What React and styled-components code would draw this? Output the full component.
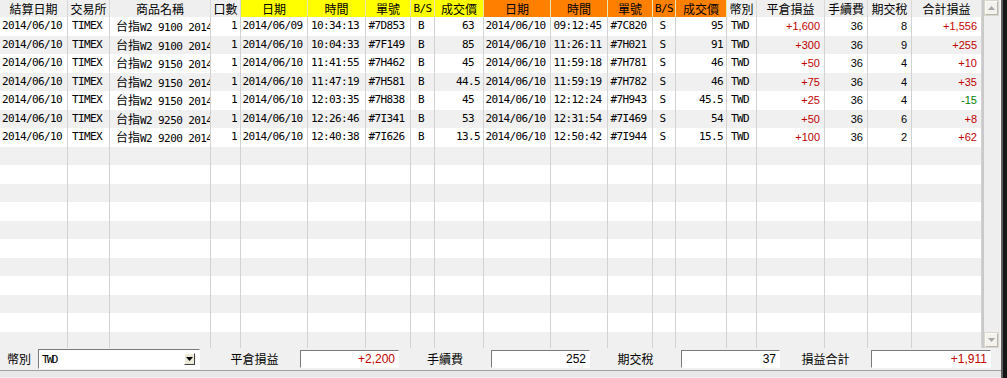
import React from 'react';
import styled, { createGlobalStyle } from 'styled-components';

const COLS =
  '68px 42px 101px 30px 67px 58px 45px 24px 49px 67px 57px 45px 23px 51px 30px 68px 43px 44px 70px';
const MONO = '"DejaVu Sans Mono", "Liberation Mono", monospace';
const CJK = '"Noto Sans CJK TC", "Noto Sans CJK SC", sans-serif';
const SANS = '"Liberation Sans", Arial, sans-serif';
const RED = '#c00000';
const GREEN = '#008000';

const Global = createGlobalStyle`
  html, body { margin: 0; padding: 0; background: #f0f0f0; overflow: hidden; }
  * { box-sizing: border-box; }
`;

const Frame = styled.div`
  display: flex;
  width: 1007px;
  height: 378px;
  overflow: hidden;
`;

const Main = styled.div`
  display: flex;
  flex-direction: column;
  width: 1001px;
  flex: none;
`;

const Edge = styled.div`
  flex: 1;
  background: #161616;
  border-left: 2px solid #5e5e5e;
`;

const GridArea = styled.div`
  display: flex;
  height: 348px;
  flex: none;
  overflow: hidden;
`;

const Table = styled.div`
  width: 982px;
  height: 348px;
  overflow: hidden;
  background: #ffffff;
  display: flex;
  flex-direction: column;
`;

const HeaderRow = styled.div`
  display: grid;
  grid-template-columns: ${COLS};
  height: 17px;
  flex: none;
`;

const toneBg = { grey: '#efefef', yellow: '#ffff00', orange: '#ff8000' };

const HeaderCell = styled.div`
  background: ${(p) => toneBg[p.$tone]};
  border-right: 1px solid ${(p) => (p.$tone === 'grey' ? '#d9d9d9' : '#e6e6b0')};
  font-family: ${(p) => (p.$latin ? MONO : CJK)};
  font-size: ${(p) => (p.$latin ? '11px' : '12px')};
  letter-spacing: ${(p) => (p.$latin ? '-0.6px' : '0')};
  line-height: 17px;
  text-align: center;
  color: #000;
  white-space: nowrap;
  overflow: hidden;
`;

const Row = styled.div`
  display: grid;
  grid-template-columns: ${COLS};
  height: 18.5px;
  flex: none;
  background: ${(p) => (p.$odd ? '#f0f0f0' : '#ffffff')};
`;

const Cell = styled.div`
  border-right: 1px solid #d2d2d2;
  font-family: ${(p) => (p.$sans ? SANS : MONO)};
  font-size: 11px;
  letter-spacing: ${(p) => (p.$sans ? '0' : '-0.6px')};
  line-height: 18px;
  color: ${(p) => p.$color || '#000'};
  text-align: ${(p) => p.$align || 'center'};
  padding: 0 ${(p) => p.$pr ?? 3}px 0 ${(p) => p.$pl ?? 0}px;
  white-space: pre;
  overflow: hidden;
  text-overflow: clip;
`;

const Cjk = styled.span`
  font-family: ${CJK};
  font-size: 12px;
  letter-spacing: 0;
`;

const Scrollbar = styled.div`
  width: 19px;
  height: 348px;
  background: #eeeeee;
  border-left: 2px solid #c9c9c9;
  border-right: 1px solid #f8f8f8;
  display: flex;
  flex-direction: column;
  justify-content: space-between;
  padding: 1px;
`;

const ScrollButton = styled.div`
  width: 13px;
  height: 14px;
  background: #f3f2ec;
  border: 1px solid;
  border-color: #fbfbf8 #b9b7ad #b9b7ad #fbfbf8;
  box-shadow: 0 0 0 1px #d9d7cc;
  display: flex;
  align-items: center;
  justify-content: center;
`;

const BottomBar = styled.div`
  display: flex;
  align-items: center;
  height: 23px;
  flex: none;
  background: #f0f0f0;
  border-bottom: 1px solid #a0a0a0;
  padding-left: 7px;
`;

const BottomStrip = styled.div`
  height: 6px;
  flex: none;
  background: #e8e8e8;
`;

const BarLabel = styled.div`
  width: ${(p) => p.$w}px;
  padding-left: ${(p) => p.$pl || 0}px;
  text-align: ${(p) => p.$align || 'center'};
  font-family: ${CJK};
  font-size: 12px;
  line-height: 20px;
  color: #000;
  flex: none;
  white-space: nowrap;
`;

const Combo = styled.div`
  width: 162px;
  height: 20px;
  flex: none;
  background: #fff;
  border: 1px solid;
  border-color: #7a7a7a #ffffff #ffffff #7a7a7a;
  display: flex;
  align-items: center;
  justify-content: space-between;
  padding: 0 4px 0 3px;
`;

const ComboText = styled.span`
  font-family: ${MONO};
  font-size: 11px;
  letter-spacing: -1.8px;
  color: #000;
`;

const ComboButton = styled.div`
  width: 11px;
  height: 12px;
  background: #ece9d8;
  border: 1px solid;
  border-color: #ffffff #404040 #404040 #ffffff;
  display: flex;
  align-items: center;
  justify-content: center;
`;

const ValueBox = styled.div`
  width: ${(p) => p.$w}px;
  height: 18px;
  flex: none;
  background: #fff;
  border: 1px solid;
  border-color: #7a7a7a #ffffff #ffffff #7a7a7a;
  font-family: ${SANS};
  font-size: 12px;
  line-height: 16px;
  text-align: right;
  padding-right: 3px;
  color: ${(p) => p.$color || '#000'};
`;

const headers = [
  ['結算日期', 'grey'],
  ['交易所', 'grey'],
  ['商品名稱', 'grey'],
  ['口數', 'grey'],
  ['日期', 'yellow'],
  ['時間', 'yellow'],
  ['單號', 'yellow'],
  ['B/S', 'yellow', true],
  ['成交價', 'yellow'],
  ['日期', 'orange'],
  ['時間', 'orange'],
  ['單號', 'orange'],
  ['B/S', 'orange', true],
  ['成交價', 'orange'],
  ['幣別', 'grey'],
  ['平倉損益', 'grey'],
  ['手續費', 'grey'],
  ['期交稅', 'grey'],
  ['合計損益', 'grey'],
];

const rows = [
  ['9100', '2014/06/09', '10:34:13', '#7D853', '63 ', '09:12:45', '#7C820', '95', '+1,600', '36', '8', '+1,556'],
  ['9100', '2014/06/10', '10:04:33', '#7F149', '85 ', '11:26:11', '#7H021', '91', '+300', '36', '9', '+255'],
  ['9150', '2014/06/10', '11:41:55', '#7H462', '45 ', '11:59:18', '#7H781', '46', '+50', '36', '4', '+10'],
  ['9150', '2014/06/10', '11:47:19', '#7H581', '44.5', '11:59:19', '#7H782', '46', '+75', '36', '4', '+35'],
  ['9150', '2014/06/10', '12:03:35', '#7H838', '45 ', '12:12:24', '#7H943', '45.5', '+25', '36', '4', '-15'],
  ['9250', '2014/06/10', '12:26:46', '#7I341', '53 ', '12:31:54', '#7I469', '54', '+50', '36', '6', '+8'],
  ['9200', '2014/06/10', '12:40:38', '#7I626', '13.5', '12:50:42', '#7I944', '15.5', '+100', '36', '2', '+62'],
];

const TOTAL_ROWS = 18;

const Arrow = ({ down, color = '#a6a6a6' }) => (
  <svg width="7" height="4" viewBox="0 0 7 4">
    {down ? <path d="M0 0h7L3.5 4z" fill={color} /> : <path d="M0 4h7L3.5 0z" fill={color} />}
  </svg>
);

function DataRow({ r, odd }) {
  if (!r) {
    return (
      <Row $odd={odd}>
        {headers.map((_, i) => (
          <Cell key={i} />
        ))}
      </Row>
    );
  }
  const [strike, d1, t1, o1, p1, t2, o2, p2, pnl, fee, tax, total] = r;
  return (
    <Row $odd={odd}>
      <Cell>2014/06/10</Cell>
      <Cell $align="left" $pl={4}>TIMEX</Cell>
      <Cell $align="left" $pl={6} $pr={0}>
        <Cjk>台指</Cjk>W2 {strike} 2014
      </Cell>
      <Cell $align="right">1</Cell>
      <Cell>{d1}</Cell>
      <Cell>{t1}</Cell>
      <Cell>{o1}</Cell>
      <Cell>B</Cell>
      <Cell $align="right">{p1}</Cell>
      <Cell>2014/06/10</Cell>
      <Cell>{t2}</Cell>
      <Cell>{o2}</Cell>
      <Cell>S</Cell>
      <Cell $align="right">{p2}</Cell>
      <Cell>TWD</Cell>
      <Cell $sans $align="right" $pr={4} $color={RED}>{pnl}</Cell>
      <Cell $sans $align="right" $pr={4}>{fee}</Cell>
      <Cell $sans $align="right" $pr={4}>{tax}</Cell>
      <Cell $sans $align="right" $pr={4} $color={total.startsWith('-') ? GREEN : RED}>
        {total}
      </Cell>
    </Row>
  );
}

export default function App() {
  return (
    <>
      <Global />
      <Frame>
        <Main>
          <GridArea>
            <Table>
              <HeaderRow>
                {headers.map(([label, tone, latin], i) => (
                  <HeaderCell key={i} $tone={tone} $latin={latin}>
                    {label}
                  </HeaderCell>
                ))}
              </HeaderRow>
              {Array.from({ length: TOTAL_ROWS }).map((_, i) => (
                <DataRow key={i} r={rows[i]} odd={i % 2 === 1} />
              ))}
            </Table>
            <Scrollbar>
              <ScrollButton>
                <Arrow />
              </ScrollButton>
              <ScrollButton>
                <Arrow down />
              </ScrollButton>
            </Scrollbar>
          </GridArea>
          <BottomBar>
            <BarLabel $w={31} $align="left">幣別</BarLabel>
            <Combo>
              <ComboText>TWD</ComboText>
              <ComboButton>
                <Arrow down color="#000" />
              </ComboButton>
            </Combo>
            <BarLabel $w={100} $pl={9}>平倉損益</BarLabel>
            <ValueBox $w={99} $color={RED}>+2,200</ValueBox>
            <BarLabel $w={92}>手續費</BarLabel>
            <ValueBox $w={99}>252</ValueBox>
            <BarLabel $w={91}>期交稅</BarLabel>
            <ValueBox $w={99}>37</ValueBox>
            <BarLabel $w={91}>損益合計</BarLabel>
            <ValueBox $w={120} $color={RED}>+1,911</ValueBox>
          </BottomBar>
          <BottomStrip />
        </Main>
        <Edge />
      </Frame>
    </>
  );
}
